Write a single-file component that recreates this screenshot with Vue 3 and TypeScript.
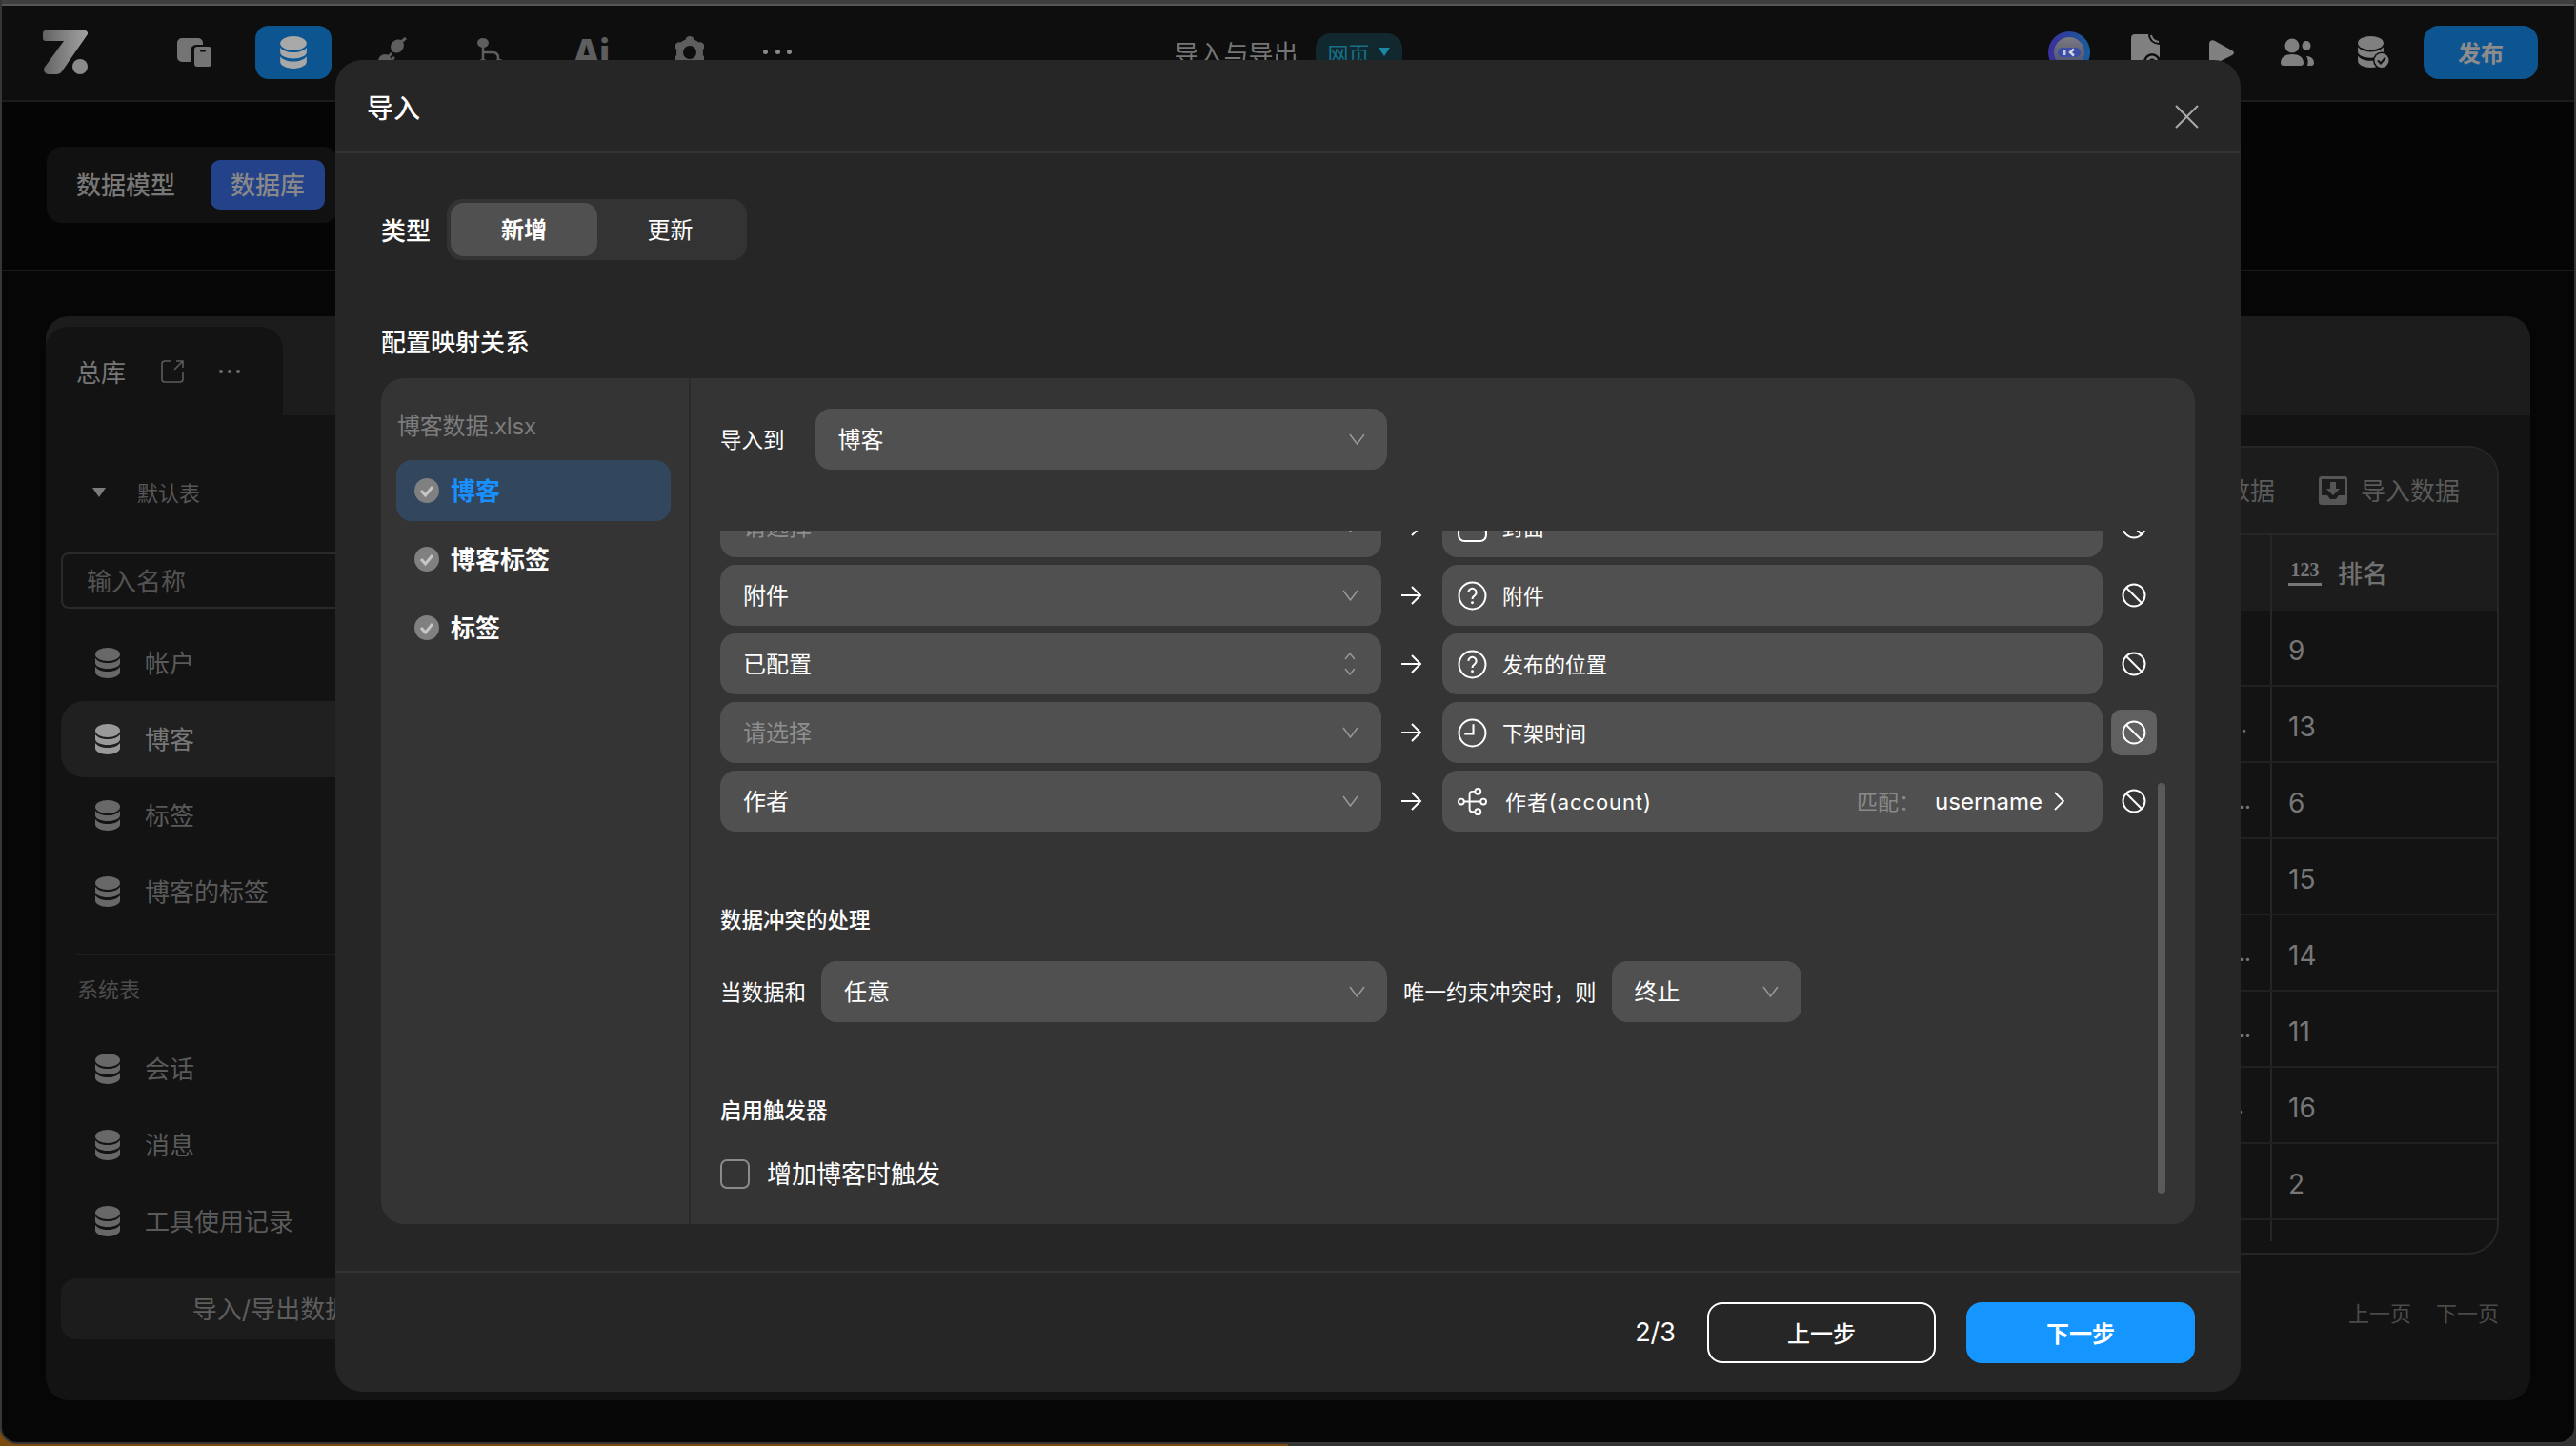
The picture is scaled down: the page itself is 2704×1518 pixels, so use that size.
<template>
  <div class="page">
    <!-- Shared icons -->
    <svg class="sprite" aria-hidden="true">
      <symbol id="i-db" viewBox="0 0 26 32">
        <ellipse cx="13" cy="7" rx="13" ry="7" fill="currentColor" />
        <path fill="currentColor" d="M0 11c2 3 7 5 13 5s11-2 13-5v5c0 3.5-6 6-13 6S0 19.5 0 16z" />
        <path fill="currentColor" d="M0 20c2 3 7 5 13 5s11-2 13-5v5.5c0 3.5-6 6.5-13 6.5S0 29 0 25.5z" />
      </symbol>
      <symbol id="i-chevron" viewBox="0 0 17 12">
        <path d="M1 1l7.5 10L16 1" fill="none" stroke="currentColor" stroke-width="1.5" />
      </symbol>
      <symbol id="i-sort" viewBox="0 0 14 24">
        <path d="M2 7l5-6 5 6M2 17l5 6 5-6" fill="none" stroke="currentColor" stroke-width="1.5" />
      </symbol>
      <symbol id="i-arrow" viewBox="0 0 22 20">
        <path d="M0 10h20M11 1l9 9-9 9" fill="none" stroke="currentColor" stroke-width="2" />
      </symbol>
      <symbol id="i-ban" viewBox="0 0 26 26">
        <circle cx="13" cy="13" r="11.5" fill="none" stroke="currentColor" stroke-width="2" />
        <path d="M5 5l16 16" stroke="currentColor" stroke-width="2" />
      </symbol>
      <symbol id="i-question" viewBox="0 0 30 30">
        <circle cx="15" cy="15" r="13.5" fill="none" stroke="currentColor" stroke-width="2" />
        <path d="M11 11.5a4 4 0 1 1 6.2 3.4c-1.4.9-2.2 1.800-2.2 3.400" fill="none" stroke="currentColor" stroke-width="2" />
        <circle cx="15" cy="22" r="1.400" fill="currentColor" />
      </symbol>
      <symbol id="i-clock" viewBox="0 0 30 30">
        <circle cx="15" cy="15" r="13.5" fill="none" stroke="currentColor" stroke-width="2" />
        <path d="M16 6v10H7" fill="none" stroke="currentColor" stroke-width="2" />
      </symbol>
      <symbol id="i-image" viewBox="0 0 30 30">
        <rect x="1" y="1" width="28" height="28" rx="6" fill="none" stroke="currentColor" stroke-width="2" />
        <path d="M2 17l7-7 5 5 4-3 10 6" fill="none" stroke="currentColor" stroke-width="2" />
      </symbol>
      <symbol id="i-fork" viewBox="0 0 32 32">
        <g fill="none" stroke="currentColor" stroke-width="2">
          <circle cx="4" cy="16" r="3" />
          <circle cx="22" cy="5" r="3" />
          <circle cx="28" cy="16" r="3" />
          <circle cx="22" cy="27" r="3" />
          <path d="M7 16h18M13 16V8q0-3 3-3h3M13 16v8q0 3 3 3h3" />
        </g>
      </symbol>
      <symbol id="i-check" viewBox="0 0 26 26">
        <circle cx="13" cy="13" r="13" fill="#808080" />
        <path d="M7 13l4.500 5L19 9" fill="none" stroke="#c6c6c6" stroke-width="3" />
      </symbol>
    </svg>

    <div class="window">
      <div class="chrome"></div>

      <header class="topbar">
        <div class="topbar-left">
          <svg class="logo" viewBox="0 0 47 46">
            <defs>
              <linearGradient id="logo-g" x1="0" y1="0" x2="1" y2="0">
                <stop offset="0" stop-color="#636363" />
                <stop offset="1" stop-color="#a2a2a2" />
              </linearGradient>
            </defs>
            <path fill="url(#logo-g)" d="M3 0h41a3 3 0 0 1 2.600 4.500L20 43a6 6 0 0 1-5 3H6a5 5 0 0 1-4.200-7.600L22 11H3a3 3 0 0 1-3-3V3a3 3 0 0 1 3-3z" />
            <ellipse cx="39" cy="38" rx="8" ry="8" fill="#8a8a8a" />
          </svg>
          <nav class="nav">
            <button class="nav-item nav-item--apps">
              <svg class="ic-apps" viewBox="0 0 36 30">
                <path fill="currentColor" d="M5 0h17a5 5 0 0 1 5 5v2h-7a6 6 0 0 0-6 6v12H5a5 5 0 0 1-5-5V5a5 5 0 0 1 5-5z" />
                <rect x="18" y="9" width="18" height="21" rx="3" fill="currentColor" />
                <rect x="24" y="12" width="6" height="2.500" rx="1" fill="#0e0e0e" />
              </svg>
            </button>
            <button class="nav-item nav-item--on">
              <svg class="ic-db-nav"><use href="#i-db" /></svg>
            </button>
            <button class="nav-item">
              <!-- unplugged connector -->
              <svg class="ic-plug" viewBox="0 0 30 32">
                <ellipse cx="20" cy="9.500" rx="6.500" ry="7.500" transform="rotate(40 20 9.500)" fill="currentColor" />
                <path d="M24 5l5-4" stroke="currentColor" stroke-width="3" />
                <circle cx="7" cy="25" r="7" fill="currentColor" />
                <path d="M10 21l4-4M13 25l4-4" stroke="currentColor" stroke-width="2.500" />
              </svg>
            </button>
            <button class="nav-item">
              <svg class="ic-flow" viewBox="0 0 30 36">
                <ellipse cx="6" cy="8" rx="6" ry="5" fill="currentColor" />
                <path d="M6 12v15M6 18h10q6 0 6 6v3" fill="none" stroke="currentColor" stroke-width="2.500" />
                <ellipse cx="6" cy="30" rx="6" ry="5" fill="currentColor" />
                <ellipse cx="23" cy="30" rx="6" ry="5" fill="currentColor" />
              </svg>
            </button>
            <button class="nav-item nav-ai">Ai</button>
            <button class="nav-item">
              <svg class="ic-gear" viewBox="0 0 30 34">
                <circle cx="15" cy="17" r="10.500" fill="none" stroke="currentColor" stroke-width="7" />
                <g fill="currentColor">
                  <circle cx="15" cy="4.500" r="4.500" />
                  <circle cx="25.800" cy="10.750" r="4.500" />
                  <circle cx="25.800" cy="23.250" r="4.500" />
                  <circle cx="15" cy="29.500" r="4.500" />
                  <circle cx="4.200" cy="23.250" r="4.500" />
                  <circle cx="4.200" cy="10.750" r="4.500" />
                </g>
              </svg>
            </button>
            <button class="nav-item nav-more">
              <span class="dot"></span><span class="dot"></span><span class="dot"></span>
            </button>
          </nav>
        </div>

        <div class="topbar-title">
          <span class="app-name">导入与导出</span>
          <span class="app-tag">网页<i class="app-tag-caret"></i></span>
        </div>

        <div class="topbar-right">
          <span class="tool">
            <svg class="ic-avatar" viewBox="0 0 44 44">
              <defs>
                <linearGradient id="avatar-ring" x1="0" y1="0" x2="1" y2="0">
                  <stop offset="0" stop-color="#3a2f9c" />
                  <stop offset="1" stop-color="#195c9c" />
                </linearGradient>
                <linearGradient id="avatar-in" x1="0" y1="0" x2="0" y2="1">
                  <stop offset="0" stop-color="#7a7a80" />
                  <stop offset="1" stop-color="#4a4e70" />
                </linearGradient>
              </defs>
              <circle cx="22" cy="22" r="22" fill="url(#avatar-ring)" />
              <circle cx="22" cy="22" r="16" fill="url(#avatar-in)" />
              <rect x="10" y="17" width="24" height="10" rx="5" fill="#3a4ea8" />
              <rect x="16" y="19" width="2.500" height="6" fill="#c8c8d4" />
              <path d="M27 18.500L23 22l4 3.500" fill="none" stroke="#d4d4dc" stroke-width="2.500" />
            </svg>
          </span>
          <span class="tool">
            <svg class="ic-file" viewBox="0 0 30 38">
              <path fill="currentColor" d="M4 0h14c0 6 4 10 12 11v27H4a4 4 0 0 1-4-4V4a4 4 0 0 1 4-4z" />
              <path d="M21 1q1 6 8 7" fill="none" stroke="currentColor" stroke-width="2" />
              <circle cx="22" cy="29" r="9" fill="#0e0e0e" />
              <circle cx="22" cy="29" r="5" fill="none" stroke="currentColor" stroke-width="3" />
            </svg>
          </span>
          <span class="tool">
            <svg class="ic-play" viewBox="0 0 26 26">
              <path fill="currentColor" d="M0 4c0-3 3-5 6-3l18 10c2.500 1.500 2.500 3.500 0 5L6 25c-3 2-6 0-6-3z" />
            </svg>
          </span>
          <span class="tool">
            <svg class="ic-users" viewBox="0 0 36 30">
              <circle cx="12" cy="8" r="7.500" fill="currentColor" />
              <ellipse cx="27" cy="8" rx="4.500" ry="5" fill="currentColor" />
              <path fill="currentColor" d="M0 26c0-6 5-9 12-9s12 3 12 9c0 2-1 3-3 3H3c-2 0-3-1-3-3zM27 19c5 0 8 3 8 7 0 2-1 3-3 3h-4c1-3 1-7-1-10z" />
            </svg>
          </span>
          <span class="tool">
            <svg class="ic-db-check" viewBox="0 0 34 34">
              <use href="#i-db" width="27" height="33" />
              <circle cx="25" cy="25.500" r="9" fill="#0e0e0e" />
              <circle cx="25" cy="25.500" r="7.500" fill="currentColor" />
              <path d="M21 25.500l3 3 5-6" fill="none" stroke="#0e0e0e" stroke-width="2" />
            </svg>
          </span>
          <button class="publish">发布</button>
        </div>
      </header>

      <div class="subbar">
        <div class="mode-tabs">
          <span class="mode-tab">数据模型</span>
          <span class="mode-tab mode-tab--on">数据库</span>
        </div>
      </div>

      <main class="content">
        <section class="card">
          <div class="card-strip">
            <div class="card-tab">
              <span>总库</span>
              <svg class="ic-open" viewBox="0 0 24 24">
                <path d="M11 1H4a3 3 0 0 0-3 3v16a3 3 0 0 0 3 3h16a3 3 0 0 0 3-3v-7M14 10l9-9M16 1h7v7" fill="none" stroke="currentColor" stroke-width="1.600" />
              </svg>
              <span class="mini-dots"><i></i><i></i><i></i></span>
            </div>
          </div>

          <div class="card-body">
            <aside class="side">
              <div class="side-head"><i class="caret"></i><span class="t">默认表</span></div>
              <div class="side-search">输入名称</div>
              <ul class="side-list">
                <li v-for="t in defaultTables" :key="t" class="side-item" :class="{ 'side-item--on': t === '博客' }">
                  <svg class="ic-db"><use href="#i-db" /></svg>
                  <span class="t">{{ t }}</span>
                </li>
              </ul>
              <div class="side-line"></div>
              <div class="side-group">系统表</div>
              <ul class="side-list side-list--sys">
                <li v-for="t in systemTables" :key="t" class="side-item">
                  <svg class="ic-db"><use href="#i-db" /></svg>
                  <span class="t">{{ t }}</span>
                </li>
              </ul>
              <button class="side-btn">导入/导出数据</button>
            </aside>

            <div class="data">
              <div class="table">
                <div class="table-tools">
                  <span class="tool-link"><span class="t">导出数据</span></span>
                  <span class="tool-link">
                    <svg class="ic-import" viewBox="0 0 30 30">
                      <path fill="#565656" fill-rule="evenodd" d="M3 0h24a3 3 0 0 1 3 3v24a3 3 0 0 1-3 3H3a3 3 0 0 1-3-3V3a3 3 0 0 1 3-3zM3 3v17h6l3 4h6l3-4h6V3z" />
                      <path fill="#565656" d="M12 6h6v7h4l-7 7-7-7h4z" />
                    </svg>
                    <span class="t">导入数据</span>
                  </span>
                </div>
                <div class="table-row table-row--head">
                  <div class="cell-rest"></div>
                  <div class="cell-num">
                    <span class="type-123">123</span>
                    <span class="t">排名</span>
                  </div>
                </div>
                <div v-for="r in rankRows" :key="r.rank" class="table-row">
                  <div class="cell-rest" :style="{ paddingRight: `${r.tailGap}px` }">{{ r.tail }}</div>
                  <div class="cell-num cell-num--val">{{ r.rank }}</div>
                </div>
                <div class="table-row table-row--end">
                  <div class="cell-rest"></div>
                  <div class="cell-num"></div>
                </div>
              </div>
              <div class="pager">
                <span>上一页</span>
                <span>下一页</span>
              </div>
            </div>
          </div>
        </section>
      </main>
    </div>

    <!-- Import dialog -->
    <div class="modal">
      <div class="modal-head">
        <span class="modal-title">导入</span>
        <svg class="modal-close" viewBox="0 0 25 25">
          <path d="M1 1l23 23M24 1L1 24" fill="none" stroke="currentColor" stroke-width="2" />
        </svg>
      </div>

      <div class="modal-body">
        <div class="type-row">
          <span class="strong-label strong-label--type">类型</span>
          <div class="segment">
            <span class="segment-item segment-item--on">新增</span>
            <span class="segment-item">更新</span>
          </div>
        </div>

        <div class="strong-label map-title">配置映射关系</div>

        <div class="panel">
          <div class="panel-left">
            <div class="file-name">博客数据.xlsx</div>
            <div
              v-for="(s, i) in sheets"
              :key="s"
              class="sheet"
              :class="{ 'sheet--on': i === 0 }"
            >
              <svg class="ic-check"><use href="#i-check" /></svg>
              <span class="t">{{ s }}</span>
            </div>
          </div>

          <div class="panel-right">
            <div class="import-to">
              <span class="field-label">导入到</span>
              <div class="select select--to">
                <span class="t">博客</span>
                <svg class="chevron"><use href="#i-chevron" /></svg>
              </div>
            </div>

            <div class="scroller">
              <div class="scroller-inner">
                <div class="map-grid">
                  <template v-for="m in mappings" :key="m.id">
                    <div class="select">
                      <span class="t" :class="{ placeholder: m.empty }">{{ m.source }}</span>
                      <svg v-if="m.open" class="sort"><use href="#i-sort" /></svg>
                      <svg v-else class="chevron"><use href="#i-chevron" /></svg>
                    </div>
                    <svg class="map-arrow"><use href="#i-arrow" /></svg>
                    <div class="target" :class="{ 'target--rel': m.match }">
                      <svg class="target-icon"><use :href="`#i-${m.icon}`" /></svg>
                      <span class="t target-name">{{ m.target }}</span>
                      <span v-if="m.match" class="target-match">
                        <em class="t">匹配：</em>
                        <span>{{ m.match }}</span>
                        <svg class="chevron-right" viewBox="0 0 12 20">
                          <path d="M1 1l9 9-9 9" fill="none" stroke="currentColor" stroke-width="1.800" />
                        </svg>
                      </span>
                    </div>
                    <span class="ban" :class="{ 'ban--on': m.hover }">
                      <svg class="ban-icon"><use href="#i-ban" /></svg>
                    </span>
                  </template>
                </div>

                <div class="section-title section-title--conflict">数据冲突的处理</div>
                <div class="conflict-row">
                  <span class="field-label">当数据和</span>
                  <div class="select select--any">
                    <span class="t">任意</span>
                    <svg class="chevron"><use href="#i-chevron" /></svg>
                  </div>
                  <span class="field-label">唯一约束冲突时，则</span>
                  <div class="select select--stop">
                    <span class="t">终止</span>
                    <svg class="chevron"><use href="#i-chevron" /></svg>
                  </div>
                </div>

                <div class="section-title section-title--trigger">启用触发器</div>
                <label class="trigger">
                  <i class="checkbox"></i>
                  <span class="t">增加博客时触发</span>
                </label>
              </div>
              <div class="scroll-thumb"></div>
            </div>
          </div>
        </div>
      </div>

      <div class="modal-foot">
        <span class="step">2/3</span>
        <button class="btn">上一步</button>
        <button class="btn btn--primary">下一步</button>
      </div>
    </div>
  </div>
</template>

<script setup lang="ts">
interface Mapping {
  id: number
  source: string
  empty?: boolean
  open?: boolean
  icon: string
  target: string
  match?: string
  hover?: boolean
}

const defaultTables = ['帐户', '博客', '标签', '博客的标签']
const systemTables = ['会话', '消息', '工具使用记录']
const sheets = ['博客', '博客标签', '标签']

// tail = the truncated text of the neighbouring column that peeks out next to the modal
const rankRows = [
  { rank: 9, tail: '', tailGap: 24 },
  { rank: 13, tail: '..', tailGap: 24 },
  { rank: 6, tail: '..', tailGap: 20 },
  { rank: 15, tail: '', tailGap: 24 },
  { rank: 14, tail: '..', tailGap: 20 },
  { rank: 11, tail: '..', tailGap: 20 },
  { rank: 16, tail: '..', tailGap: 28 },
  { rank: 2, tail: '', tailGap: 24 },
]

const mappings: Mapping[] = [
  { id: 1, source: '请选择', empty: true, icon: 'image', target: '封面' },
  { id: 2, source: '附件', icon: 'question', target: '附件' },
  { id: 3, source: '已配置', open: true, icon: 'question', target: '发布的位置' },
  { id: 4, source: '请选择', empty: true, icon: 'clock', target: '下架时间', hover: true },
  { id: 5, source: '作者', icon: 'fork', target: '作者(account)', match: 'username' },
]
</script>

<style>
html,
body {
  margin: 0;
  background: #000;
}
</style>

<style scoped>
* {
  box-sizing: border-box;
}

.page {
  position: relative;
  width: 2704px;
  height: 1518px;
  overflow: hidden;
  font-family: Inter, "Noto Sans CJK SC", sans-serif;
  background: linear-gradient(90deg, #7a4a10 50%, #333 50%);
}

.sprite {
  position: absolute;
  width: 0;
  height: 0;
}

button {
  border: 0;
  padding: 0;
  font: inherit;
  color: inherit;
  background: none;
}

ul {
  list-style: none;
  margin: 0;
  padding: 0;
}

em {
  font-style: normal;
}

/* Noto sits a little low in its line box, lift the label over the icon's centre */
.t {
  margin-bottom: 3px;
}

/* Window behind the dialog */
.window {
  display: flex;
  flex-direction: column;
  width: 2704px;
  height: 1516px;
  overflow: hidden;
  background: #060606;
  border: solid #363636;
  border-width: 0 2px 2px;
  border-radius: 0 0 18px 18px;
  color: #777;
}

.chrome {
  flex: none;
  height: 6px;
  margin: 0 -2px;
  background: #3f3f3f;
  border-bottom: 2px solid #565656;
}

.topbar {
  flex: none;
  display: grid;
  grid-template-columns: 1fr auto 1fr;
  align-items: center;
  height: 101px;
  padding: 0 38px 2px 38px;
  background: #0e0e0e;
  border-bottom: 2px solid #1c1c1c;
}

.topbar-left {
  display: flex;
  align-items: center;
  padding-left: 5px;
}

.logo {
  width: 47px;
  height: 46px;
  margin-right: 72px;
}

.nav {
  display: flex;
  align-items: center;
  gap: 24px;
}

.nav-item {
  display: flex;
  align-items: center;
  justify-content: center;
  width: 80px;
  height: 56px;
  border-radius: 14px;
  color: #5e5e5e;
}

.nav-item--apps {
  color: #747474;
}

.nav-item--on {
  background: #0c5590;
  color: #a8a8a8;
}

.ic-apps {
  width: 36px;
  height: 30px;
}

.ic-db-nav {
  width: 30px;
  height: 34px;
}

.ic-plug {
  width: 30px;
  height: 32px;
}

.ic-flow {
  width: 30px;
  height: 36px;
}

.ic-gear {
  width: 30px;
  height: 34px;
}

.nav-ai {
  font-size: 38px;
  font-weight: 800;
  letter-spacing: -1px;
}

.nav-more {
  gap: 7.500px;
  margin-left: -12px;
}

.dot {
  width: 5px;
  height: 5px;
  border-radius: 50%;
  background: #8a8a8a;
}

.topbar-title {
  display: flex;
  align-items: center;
  gap: 18px;
}

.app-name {
  font-size: 26px;
  color: #767676;
}

.app-tag {
  display: flex;
  align-items: center;
  height: 40px;
  padding: 0 13px;
  gap: 9px;
  border-radius: 16px;
  font-size: 22px;
  color: #17708a;
  background: #12282f;
}

.app-tag-caret {
  width: 0;
  height: 0;
  border: 6px solid transparent;
  border-top: 9px solid #1a88a3;
  border-bottom: 0;
}

.topbar-right {
  display: flex;
  align-items: center;
  justify-content: flex-end;
  gap: 32px;
}

.tool {
  display: flex;
  align-items: center;
  justify-content: center;
  width: 48px;
  color: #808080;
}

.ic-avatar {
  width: 44px;
  height: 44px;
}

.ic-file {
  width: 30px;
  height: 38px;
}

.ic-play {
  width: 26px;
  height: 26px;
}

.ic-users {
  width: 36px;
  height: 30px;
}

.ic-db-check {
  width: 34px;
  height: 34px;
}

.publish {
  width: 120px;
  height: 56px;
  margin-left: -4px;
  border-radius: 16px;
  background: #0c5590;
  color: #8c8c8c;
  font-size: 24px;
  font-weight: 600;
}

.subbar {
  flex: none;
  height: 178px;
  padding: 47px 0 0 47px;
  background: #050505;
  border-bottom: 2px solid #1a1a1a;
}

.mode-tabs {
  display: inline-flex;
  align-items: center;
  height: 80px;
  padding: 14px;
  border-radius: 16px;
  background: #111;
  font-size: 26px;
  font-weight: 500;
}

.mode-tab {
  display: flex;
  align-items: center;
  height: 52px;
  padding: 0 37px 3px 17px;
}

.mode-tab--on {
  padding: 0 21px 3px;
  border-radius: 10px;
  background: #24428a;
  color: #888;
}

.content {
  flex: 1;
  min-height: 0;
  padding: 47px 46px 44px;
}

.card {
  display: flex;
  flex-direction: column;
  height: 100%;
  overflow: hidden;
  border-radius: 24px;
  background: #131313;
}

.card-strip {
  flex: none;
  height: 104px;
  padding-top: 11px;
  background: #1c1c1c;
}

.card-tab {
  display: flex;
  align-items: center;
  width: 249px;
  height: 93px;
  padding: 0 0 0 32px;
  border-radius: 24px 24px 0 0;
  background: #131313;
  font-size: 26px;
  color: #777;
}

.ic-open {
  width: 24px;
  height: 24px;
  margin-left: 37px;
  color: #5c5c5c;
}

.mini-dots {
  display: flex;
  gap: 5px;
  margin-left: 37px;
}

.mini-dots i {
  width: 4px;
  height: 4px;
  border-radius: 50%;
  background: #707070;
}

.card-body {
  flex: 1;
  display: flex;
  min-height: 0;
}

.side {
  flex: none;
  width: 472px;
  padding: 61px 0 0 16px;
  color: #5a5a5a;
}

.side-head {
  display: flex;
  align-items: center;
  height: 40px;
  padding-left: 33px;
  font-size: 22px;
  color: #565656;
}

.caret {
  width: 0;
  height: 0;
  margin-right: 33px;
  border: 7px solid transparent;
  border-top: 10px solid #7c7c7c;
  border-bottom: 0;
}

.side-search {
  display: flex;
  align-items: center;
  height: 59px;
  margin-top: 43px;
  padding: 0 0 3px 25px;
  border: 2px solid #2a2a2a;
  border-radius: 8px;
  font-size: 26px;
  color: #535353;
}

.side-list {
  margin-top: 17px;
}

.side-list--sys {
  margin-top: 28px;
}

.side-item {
  display: flex;
  align-items: center;
  height: 80px;
  padding-left: 36px;
  gap: 26px;
  border-radius: 24px;
  font-size: 26px;
}

.side-item--on {
  background: #202020;
  color: #777;
}

.ic-db {
  width: 26px;
  height: 32px;
  color: #686868;
}

.side-item--on .ic-db {
  color: #999;
}

.side-line {
  height: 2px;
  margin: 25px 0 0 16px;
  background: #1e1e1e;
}

.side-group {
  margin: 21px 0 0 17px;
  font-size: 22px;
  line-height: 30px;
  color: #4c4c4c;
}

.side-btn {
  display: block;
  width: 441px;
  height: 64px;
  margin-top: 20px;
  padding-bottom: 3px;
  border-radius: 16px;
  background: #1c1c1c;
  font-size: 26px;
  color: #5e5e5e;
}

.data {
  flex: 1;
  min-width: 0;
  padding: 32px 33px 0 0;
}

.table {
  height: 849px;
  overflow: hidden;
  border: 2px solid #262626;
  border-left: 0;
  border-radius: 0 32px 32px 0;
}

.table-tools {
  display: flex;
  align-items: center;
  justify-content: flex-end;
  gap: 46px;
  height: 92px;
  padding-right: 39px;
  background: #1c1c1c;
  border-bottom: 2px solid #262626;
  font-size: 26px;
  color: #5a5a5a;
}

.tool-link {
  display: flex;
  align-items: center;
  gap: 14px;
}

.ic-import {
  width: 30px;
  height: 30px;
}

.table-row {
  display: flex;
  height: 80px;
  border-bottom: 2px solid #212121;
}

.table-row--head {
  height: 79px;
  background: #1c1c1c;
  border-bottom: 0;
  font-size: 26px;
  font-weight: 500;
  color: #707070;
}

.table-row--end {
  height: 22px;
  border-bottom: 0;
}

.cell-rest {
  flex: 1;
  display: flex;
  align-items: center;
  justify-content: flex-end;
  font-size: 24px;
  color: #777;
}

.cell-num {
  flex: none;
  display: flex;
  align-items: center;
  gap: 17px;
  width: 238px;
  padding-left: 17px;
  border-left: 2px solid #262626;
}

.cell-num--val {
  padding-top: 5px;
  font-size: 28px;
  color: #777;
}

.type-123 {
  width: 35px;
  padding-bottom: 4px;
  border-bottom: 3px solid #777;
  font-family: "Liberation Serif", serif;
  font-size: 20px;
  font-weight: 700;
  line-height: 20px;
  text-align: center;
  color: #777;
}

.pager {
  display: flex;
  justify-content: flex-end;
  gap: 26px;
  margin-top: 47px;
  font-size: 22px;
  line-height: 30px;
  color: #4a4a4a;
}

/* Dialog */
.modal {
  position: absolute;
  left: 352px;
  top: 63px;
  display: flex;
  flex-direction: column;
  width: 2000px;
  height: 1398px;
  border-radius: 28px;
  background: #262626;
  color: #fff;
}

.modal-head {
  flex: none;
  display: flex;
  align-items: center;
  justify-content: space-between;
  height: 98px;
  padding: 0 44px 0 33px;
  border-bottom: 2px solid #343434;
}

.modal-title {
  margin-top: 2px;
  font-size: 28px;
  font-weight: 500;
}

.modal-close {
  width: 25px;
  height: 25px;
  margin-top: 22px;
  color: #a8a8a8;
}

.modal-body {
  flex: 1;
  min-height: 0;
  display: flex;
  flex-direction: column;
  padding: 48px 48px 0;
}

.type-row {
  flex: none;
  display: flex;
  align-items: center;
  gap: 18px;
}

.strong-label {
  font-size: 26px;
  font-weight: 500;
  line-height: 36px;
}

.strong-label--type {
  margin-top: 3px;
}

.segment {
  display: flex;
  width: 315px;
  height: 64px;
  padding: 4px;
  margin-left: -1px;
  border-radius: 16px;
  background: #333;
  font-size: 24px;
}

.segment-item {
  display: flex;
  align-items: center;
  justify-content: center;
  flex: 1;
  padding-bottom: 3px;
  border-radius: 14px;
}

.segment-item--on {
  flex: none;
  width: 154px;
  background: #505050;
  font-weight: 600;
}

.map-title {
  flex: none;
  margin: 69px 0 19px;
}

.panel {
  flex: none;
  display: flex;
  height: 888px;
  overflow: hidden;
  border-radius: 24px;
  background: #343434;
}

.panel-left {
  flex: none;
  width: 325px;
  padding: 0 19px 0 16px;
  border-right: 2px solid #2a2a2a;
}

.file-name {
  height: 86px;
  padding: 34px 0 0 1px;
  font-size: 24px;
  line-height: 34px;
  letter-spacing: -0.200px;
  color: #7c7c7c;
}

.sheet {
  display: flex;
  align-items: center;
  gap: 12px;
  height: 64px;
  margin-bottom: 8px;
  padding-left: 19px;
  border-radius: 16px;
  font-size: 26px;
  font-weight: 600;
}

.sheet--on {
  background: #32475e;
  color: #1890ff;
}

.ic-check {
  width: 26px;
  height: 26px;
}

.panel-right {
  flex: 1;
  min-width: 0;
  display: flex;
  flex-direction: column;
}

.import-to {
  flex: none;
  display: flex;
  align-items: center;
  gap: 32px;
  height: 160px;
  padding: 0 31px 32px;
}

.field-label {
  flex: none;
  margin-bottom: 3px;
  font-size: 22.500px;
}

.select {
  display: flex;
  align-items: center;
  justify-content: space-between;
  height: 64px;
  padding: 0 24px;
  border-radius: 16px;
  background: #505050;
  font-size: 24px;
}

.select--to {
  width: 600px;
  padding-right: 23px;
}

.select--any {
  width: 594px;
  padding-right: 23px;
}

.select--stop {
  width: 199px;
}

.placeholder {
  color: #8e8e8e;
}

.chevron {
  width: 17px;
  height: 12px;
  color: #999;
}

.sort {
  width: 14px;
  height: 24px;
  margin-right: 2px;
  color: #999;
}

.scroller {
  position: relative;
  flex: 1;
  min-height: 0;
  overflow: hidden;
  padding-left: 31px;
}

.scroller-inner {
  margin-top: -36px;
}

.map-grid {
  display: grid;
  grid-template-columns: 694px 64px 693px 57px;
  grid-auto-rows: 64px;
  row-gap: 8px;
  align-items: center;
}

.map-arrow {
  width: 22px;
  height: 20px;
  margin-left: 21px;
  color: #fff;
}

.target {
  display: flex;
  align-items: center;
  height: 64px;
  padding-left: 16px;
  border-radius: 16px;
  background: #505050;
  font-size: 22px;
}

.target-icon {
  flex: none;
  width: 31px;
  height: 31px;
  color: #fff;
}

.target-name {
  margin-left: 16px;
}

.target--rel .target-name {
  margin-left: 19px;
  letter-spacing: 0.900px;
}

.target-match {
  display: flex;
  align-items: center;
  margin-left: auto;
  padding-right: 39px;
  font-size: 24px;
}

.target-match em {
  margin-right: 16px;
  font-size: 22px;
  color: #8a8a8a;
}

.chevron-right {
  width: 12px;
  height: 20px;
  margin-left: 12px;
  color: #fff;
}

.ban {
  display: flex;
  align-items: center;
  justify-content: center;
  width: 48px;
  height: 48px;
  margin-left: 9px;
  border-radius: 10px;
}

.ban--on {
  background: #606060;
}

.ban-icon {
  width: 26px;
  height: 26px;
  color: #fff;
}

.section-title {
  font-size: 22.500px;
  font-weight: 500;
  line-height: 32px;
}

.section-title--conflict {
  margin: 77px 0 27px;
}

.section-title--trigger {
  margin: 77px 0 30px;
}

.conflict-row {
  display: flex;
  align-items: center;
}

.conflict-row .select--any {
  margin: 0 17px 0 16px;
}

.conflict-row .select--stop {
  margin-left: 16px;
}

.trigger {
  display: flex;
  align-items: center;
  gap: 18px;
  font-size: 26px;
}

.checkbox {
  width: 31px;
  height: 31px;
  border: 2px solid #8a8a8a;
  border-radius: 7px;
}

.scroll-thumb {
  position: absolute;
  right: 31px;
  top: 265px;
  width: 8px;
  height: 431px;
  border-radius: 4px;
  background: #5a5a5a;
}

.modal-foot {
  flex: none;
  display: flex;
  align-items: center;
  justify-content: flex-end;
  height: 127px;
  padding: 0 48px;
  border-top: 2px solid #343434;
}

.step {
  margin-right: 33px;
  font-size: 27px;
}

.btn {
  width: 240px;
  height: 64px;
  border: 2px solid #fff;
  border-radius: 16px;
  font-size: 24px;
  font-weight: 500;
}

.btn--primary {
  margin-left: 32px;
  border: 0;
  background: #1596ff;
  font-weight: 600;
}
</style>
